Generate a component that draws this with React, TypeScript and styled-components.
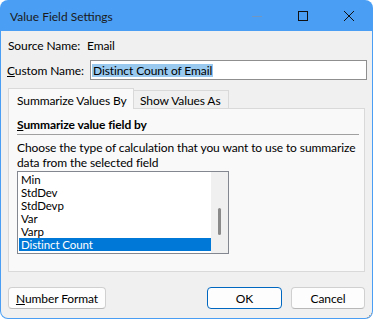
import React from "react";
import styled, { createGlobalStyle } from "styled-components";

const GlobalStyle = createGlobalStyle`
  html, body {
    margin: 0;
    padding: 0;
    background: #ffffff;
  }
  body {
    font-family: Lato, "Noto Sans", sans-serif;
    font-size: 12px;
    letter-spacing: -0.1px;
    color: #000;
    white-space: nowrap;
  }
  * {
    box-sizing: border-box;
  }
`;

const Window = styled.div`
  position: relative;
  width: 373px;
  height: 319px;
  display: flex;
  flex-direction: column;
  background: #4a9ff5;
  border-radius: 8px;
  padding: 0 1px 1px 1px;
  overflow: hidden;
`;

const TitleBar = styled.div`
  height: 31px;
  flex: none;
  display: flex;
  align-items: center;
  padding-left: 9px;
`;

const Title = styled.div`
  flex: 1;
  color: #1a1a1a;
  font-size: 12px;
  letter-spacing: 0;
  line-height: 15px;
  padding-top: 1px;
`;

const CaptionButton = styled.div`
  width: 46px;
  height: 31px;
  display: flex;
  align-items: center;
  justify-content: center;
`;

const Client = styled.div`
  flex: 1;
  display: flex;
  flex-direction: column;
  background: #f0f0f0;
  border-radius: 0 0 7px 7px;
  padding: 7px 5px 0 6px;
`;

const SourceRow = styled.div`
  display: flex;
  height: 15px;
  line-height: 15px;
  padding-left: 1px;
`;

const SourceLabel = styled.span`
  width: 79px;
`;

const CustomRow = styled.div`
  display: flex;
  align-items: center;
  margin-top: 7px;
  height: 20px;
`;

const CustomLabel = styled.label`
  width: 83px;
  line-height: 15px;
`;

const TextInput = styled.div`
  width: 277px;
  height: 20px;
  border: 1px solid #8f8f8f;
  background: #ffffff;
  padding: 0 0 0 1px;
  display: flex;
  align-items: center;
  line-height: 13px;
`;

const Selected = styled.span`
  background: #99c9ef;
  padding: 0 1px;
`;

const TabStrip = styled.div`
  display: flex;
  align-items: flex-end;
  height: 21px;
  margin-top: 8px;
  margin-bottom: -1px;
  position: relative;
  z-index: 1;
  padding-left: 1px;
`;

const Tab = styled.div<{ $active?: boolean }>`
  height: ${(p) => (p.$active ? "21px" : "18px")};
  margin-bottom: ${(p) => (p.$active ? "0" : "1px")};
  margin-left: ${(p) => (p.$active ? "0" : "-1px")};
  width: ${(p) => (p.$active ? "126px" : "96px")};
  border: 1px solid #d9d9d9;
  border-bottom: none;
  background: ${(p) => (p.$active ? "#f9f9f9" : "#f0f0f0")};
  padding-left: ${(p) => (p.$active ? "8px" : "6px")};
  line-height: 15px;
  padding-top: ${(p) => (p.$active ? "4px" : "2px")};
  position: relative;
  z-index: ${(p) => (p.$active ? 2 : 1)};
`;

const Panel = styled.div`
  width: 357px;
  height: 164px;
  margin-left: 1px;
  border: 1px solid #d9d9d9;
  background: #f9f9f9;
  padding: 8px 5px 0 8px;
  display: flex;
  flex-direction: column;
`;

const GroupHeading = styled.div`
  font-weight: 700;
  line-height: 15px;
  padding-bottom: 2px;
  border-bottom: 1px solid #a0a0a0;
`;

const Description = styled.div`
  margin-top: 5px;
  line-height: 15px;
`;

const ListBox = styled.div`
  margin-top: 1px;
  width: 212px;
  height: 83px;
  border: 1px solid #828790;
  background: #ffffff;
  display: flex;
`;

const ListItems = styled.div`
  flex: 1;
  padding: 1px 0 0 1px;
  overflow: hidden;
`;

const ListItem = styled.div<{ $selected?: boolean }>`
  height: 13px;
  line-height: 13px;
  font-size: 11.5px;
  padding-left: 2px;
  background: ${(p) => (p.$selected ? "#0078d7" : "transparent")};
  color: ${(p) => (p.$selected ? "#ffffff" : "#000000")};
`;

const ScrollTrack = styled.div`
  width: 17px;
  background: #f0f0f0;
  display: flex;
  justify-content: center;
  padding-top: 36px;
`;

const ScrollThumb = styled.div`
  width: 3px;
  height: 27px;
  border-radius: 2px;
  background: #8a8a8a;
`;

const ButtonRow = styled.div`
  display: flex;
  align-items: center;
  margin-top: 15px;
  padding-left: 1px;
  padding-right: 2px;
  gap: 9px;
`;

const Button = styled.button<{ $default?: boolean; $width: number }>`
  width: ${(p) => p.$width}px;
  height: 22px;
  font-family: inherit;
  font-size: 12px;
  letter-spacing: -0.1px;
  color: #000;
  background: #fdfdfd;
  border: 1px solid ${(p) => (p.$default ? "#0067c0" : "#d0d0d0")};
  border-bottom-color: ${(p) => (p.$default ? "#0067c0" : "#b8b8b8")};
  border-radius: 4px;
  padding: 0;
  line-height: 15px;
`;

const Spacer = styled.div`
  flex: 1;
`;

const Grip = styled.svg`
  position: absolute;
  right: 1px;
  bottom: 1px;
`;

const items = ["Min", "StdDev", "StdDevp", "Var", "Varp", "Distinct Count"];

export default function App() {
  return (
    <>
      <GlobalStyle />
      <Window>
        <TitleBar>
          <Title>Value Field Settings</Title>
          <CaptionButton>
            <svg width="10" height="10" viewBox="0 0 10 10">
              <path d="M0 5.5h10" stroke="#6f97c2" strokeWidth="1" />
            </svg>
          </CaptionButton>
          <CaptionButton>
            <svg width="10" height="10" viewBox="0 0 10 10">
              <rect x="0.5" y="0.5" width="9" height="9" fill="none" stroke="#111" strokeWidth="1" />
            </svg>
          </CaptionButton>
          <CaptionButton>
            <svg width="10" height="10" viewBox="0 0 10 10">
              <path d="M0 0L10 10M10 0L0 10" stroke="#111" strokeWidth="1" />
            </svg>
          </CaptionButton>
        </TitleBar>
        <Client>
          <SourceRow>
            <SourceLabel>Source Name:</SourceLabel>
            <span>Email</span>
          </SourceRow>
          <CustomRow>
            <CustomLabel>
              <u>C</u>ustom Name:
            </CustomLabel>
            <TextInput>
              <Selected>Distinct Count of Email</Selected>
            </TextInput>
          </CustomRow>
          <TabStrip>
            <Tab $active>Summarize Values By</Tab>
            <Tab>Show Values As</Tab>
          </TabStrip>
          <Panel>
            <GroupHeading>
              <u>S</u>ummarize value field by
            </GroupHeading>
            <Description>
              Choose the type of calculation that you want to use to summarize
              <br />
              data from the selected field
            </Description>
            <ListBox>
              <ListItems>
                {items.map((it) => (
                  <ListItem key={it} $selected={it === "Distinct Count"}>
                    {it}
                  </ListItem>
                ))}
              </ListItems>
              <ScrollTrack>
                <ScrollThumb />
              </ScrollTrack>
            </ListBox>
          </Panel>
          <ButtonRow>
            <Button $width={98}>
              <u>N</u>umber Format
            </Button>
            <Spacer />
            <Button $default $width={75}>
              OK
            </Button>
            <Button $width={74}>Cancel</Button>
          </ButtonRow>
        </Client>
        <Grip width="5" height="5" viewBox="0 0 5 5">
          <rect x="4" y="0" width="1" height="1" fill="#a0a0a0" />
          <rect x="2" y="2" width="1" height="1" fill="#a0a0a0" />
          <rect x="4" y="2" width="1" height="1" fill="#a0a0a0" />
          <rect x="0" y="4" width="1" height="1" fill="#a0a0a0" />
          <rect x="2" y="4" width="1" height="1" fill="#a0a0a0" />
          <rect x="4" y="4" width="1" height="1" fill="#a0a0a0" />
        </Grip>
      </Window>
    </>
  );
}
